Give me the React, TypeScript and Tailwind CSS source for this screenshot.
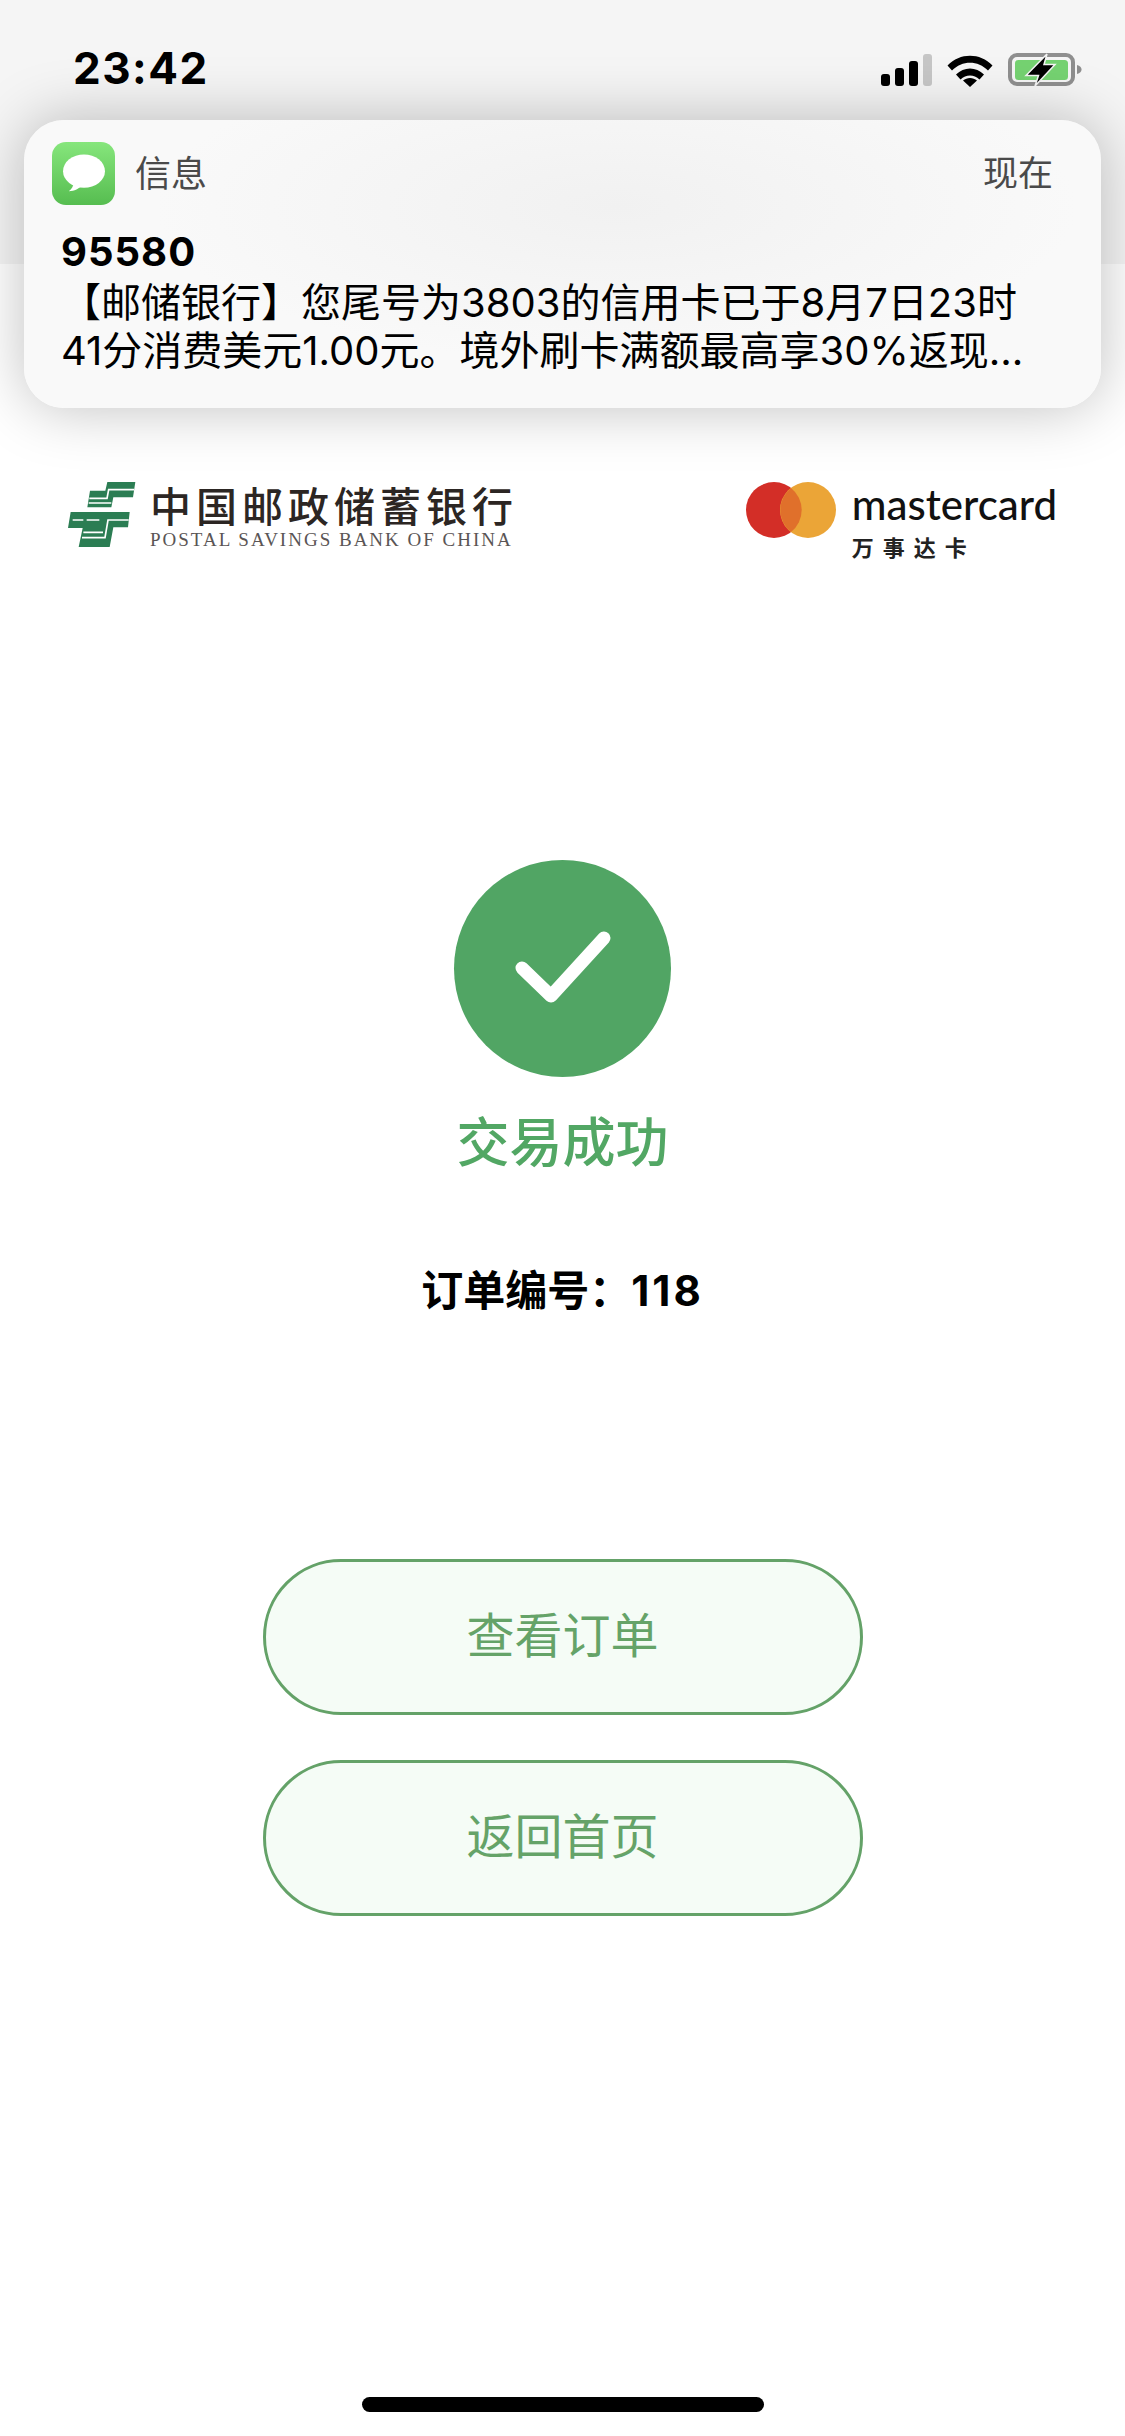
const CJK = "font-['Inter','Noto_Sans_CJK_SC',sans-serif]";

function StatusIcons() {
  return (
    <div className="flex items-center">
      {/* signal */}
      <div className="flex items-end gap-[5px] h-[32px]">
        <div className="w-[9px] h-[12px] rounded-[3px] bg-black" />
        <div className="w-[9px] h-[18px] rounded-[3px] bg-black" />
        <div className="w-[9px] h-[25px] rounded-[3px] bg-black" />
        <div className="w-[9px] h-[32px] rounded-[3px] bg-[#c6c6c6]" />
      </div>
      {/* wifi */}
      <svg className="ml-[15px]" width="46" height="33" viewBox="0 0 46 33">
        <path d="M0.5 11.5C13 -1.5 33 -1.5 45.5 11.5L41 16.500C31 6 15 6 5 16.500Z" fill="#000" />
        <path d="M9 20.500C17 12.500 29 12.500 37 20.500L32.500 25.500C27 20 19 20 13.500 25.500Z" fill="#000" />
        <path d="M16 26.500C20 23 26 23 30 26.500L23 33Z" fill="#000" />
      </svg>
      {/* battery */}
      <svg className="ml-[15px]" width="74" height="34" viewBox="0 0 74 34">
        <rect x="2" y="2" width="63" height="29" rx="7" fill="none" stroke="#8f8f8f" strokeWidth="4" />
        <rect x="7" y="7" width="53" height="20" rx="3.500" fill="#75d271" />
        <path d="M69 12C72 12.500 73.500 14.500 73.500 16.500C73.500 18.500 72 20.500 69 21Z" fill="#8f8f8f" />
        <path d="M39 1L18 22.500H30.500L27 33L47 11.500H36Z" fill="#000" stroke="#f4f4f4" strokeWidth="1.500" />
      </svg>
    </div>
  );
}

function MessagesIcon() {
  return (
    <div className="w-[63px] h-[63px] rounded-[14px] bg-gradient-to-b from-[#86e67c] to-[#56bd50] flex items-center justify-center">
      <svg width="44" height="40" viewBox="0 0 46 42">
        <ellipse cx="23" cy="18" rx="22" ry="17.500" fill="#fff" />
        <path d="M12 30C12 34 10 37 7 39C13 39 18 36 21 33Z" fill="#fff" />
      </svg>
    </div>
  );
}

function PostalLogo() {
  return (
    <div className="flex items-start">
      <svg width="69" height="66" viewBox="30 20 207 198">
        <path d="M148 20H232L225 66H166L160 96H88L96 46H142Z" fill="#2b7d53" />
        <path d="M38 110H215L210 156H166L155 215H62L74 158H30Z" fill="#2b7d53" />
        <path d="M228 43H152L147 69H94M160 83H92" stroke="#fff" strokeWidth="5" fill="none" />
        <path d="M44 134H76M86 134H124M212 134H150L141 187H72M135 171H76" stroke="#fff" strokeWidth="5" fill="none" />
      </svg>
      <div className="ml-[13px] flex flex-col">
        <div className="text-[41px] leading-[44px] font-medium tracking-[5px] text-[#2c2623] whitespace-nowrap font-['Noto_Sans_CJK_SC',sans-serif]">
          中国邮政储蓄银行
        </div>
        <div className="mt-[4px] text-[19px] leading-[20px] tracking-[2px] text-[#5a5555] whitespace-nowrap font-['Liberation_Serif',serif]">
          POSTAL SAVINGS BANK OF CHINA
        </div>
      </div>
    </div>
  );
}

function MastercardLogo() {
  return (
    <div className="flex">
      <svg width="90" height="56" viewBox="0 0 90 56">
        <circle cx="28" cy="28" r="28" fill="#d32e27" />
        <circle cx="62" cy="28" r="28" fill="#eba537" />
        <path d="M45 6A28 28 0 0 1 45 50A28 28 0 0 1 45 6Z" fill="#e0702b" />
      </svg>
      <div className="ml-[16px] flex flex-col">
        <div className="mt-[1px] text-[42px] leading-[42px] font-medium text-[#111] whitespace-nowrap font-['Lato',sans-serif]">
          mastercard
        </div>
        <div className="mt-[9px] text-[22px] leading-[24px] font-bold tracking-[9px] text-[#222] whitespace-nowrap font-['Noto_Sans_CJK_SC',sans-serif]">
          万事达卡
        </div>
      </div>
    </div>
  );
}

function OutlineButton({ label }: { label: string }) {
  return (
    <button className="w-[600px] h-[156px] pb-[3px] rounded-[78px] border-[3px] border-[#64a268] bg-[#f5fcf6] text-[48px] text-[#65a368] flex items-center justify-center">
      {label}
    </button>
  );
}

export default function App() {
  return (
    <div className={`relative w-[1125px] h-[2436px] overflow-hidden bg-white flex flex-col ${CJK}`}>
      {/* status bar */}
      <div className="h-[264px] bg-[#f5f5f5] shrink-0">
        <div className="flex justify-between pt-[53px] pl-[73px] pr-[43px]">
          <div className="text-[44px] leading-[30px] font-bold tracking-[1.5px] text-black">23:42</div>
          <StatusIcons />
        </div>
      </div>

      {/* notification */}
      <div className="absolute left-[24px] top-[120px] w-[1077px] h-[288px] rounded-[40px] bg-[radial-gradient(ellipse_at_55%_30%,#f1f1f1,#f9f9f9_55%)] shadow-[0_0_60px_rgba(0,0,0,0.25)]">
        <div className="flex items-center justify-between pt-[22px] pl-[28px] pr-[48px]">
          <div className="flex items-center">
            <MessagesIcon />
            <span className="ml-[20px] text-[36px] text-[#4a4a4a]">信息</span>
          </div>
          <span className="text-[35px] text-[#4a4a4a]">现在</span>
        </div>
        <div className="mt-[23px] pl-[37px] text-[40px] leading-[48px] text-black whitespace-nowrap">
          <div className="mb-[3px] font-bold tracking-[1px]">95580</div>
          <div>【邮储银行】您尾号为3803的信用卡已于8月7日23时</div>
          <div>41分消费美元1.00元。境外刷卡满额最高享30%返现...</div>
        </div>
      </div>

      {/* logos */}
      <div className="mt-[218px] pl-[68px] pr-[68px] flex justify-between items-start">
        <PostalLogo />
        <MastercardLogo />
      </div>

      {/* result */}
      <div className="mt-[302px] flex flex-col items-center">
        <div className="w-[217px] h-[217px] rounded-full bg-[#51a564] flex items-center justify-center">
          <svg width="96" height="76" viewBox="0 0 96 76">
            <path d="M7 37L36 65L89 7" fill="none" stroke="#fff" strokeWidth="13" strokeLinecap="round" strokeLinejoin="round" />
          </svg>
        </div>
        <div className="mt-[36px] text-[53px] leading-[60px] font-medium text-[#52a764]">交易成功</div>
        <div className="mt-[90px] text-[42px] leading-[56px] font-bold text-black">
          订单编号：<span className="tracking-[3px]">118</span>
        </div>
        <div className="mt-[240px] flex flex-col gap-[45px]">
          <OutlineButton label="查看订单" />
          <OutlineButton label="返回首页" />
        </div>
      </div>

      {/* home indicator */}
      <div className="absolute bottom-[24px] left-[362px] w-[402px] h-[15px] rounded-full bg-black" />
    </div>
  );
}
